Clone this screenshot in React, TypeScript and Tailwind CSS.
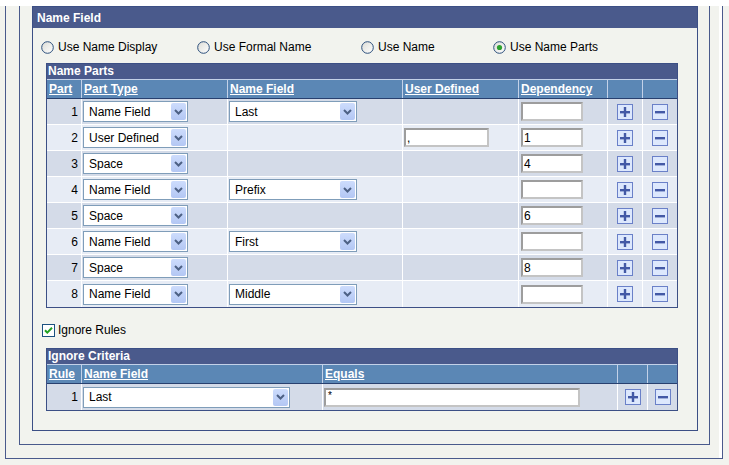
import React from "react"

type Part = {
  type: string
  field?: string
  user?: string
  dep: string
}

const parts: Part[] = [
  { type: "Name Field", field: "Last", dep: "" },
  { type: "User Defined", user: ",", dep: "1" },
  { type: "Space", dep: "4" },
  { type: "Name Field", field: "Prefix", dep: "" },
  { type: "Space", dep: "6" },
  { type: "Name Field", field: "First", dep: "" },
  { type: "Space", dep: "8" },
  { type: "Name Field", field: "Middle", dep: "" },
]

// column widths include the 1px separator on the left
const partCols = ["w-[34px]", "w-[146px]", "w-[175px]", "w-[116px]", "w-[89px]", "w-[35px]", "w-[35px]"]
const partHeads = ["Part", "Part Type", "Name Field", "User Defined", "Dependency", "", ""]

const ruleCols = ["w-[34px]", "w-[241px]", "w-[295px]", "w-[30px]", "w-[30px]"]
const ruleHeads = ["Rule", "Name Field", "Equals", "", ""]

function Chevron() {
  return (
    <svg width="9" height="6" viewBox="0 0 9 6">
      <path d="M1 1 L4.5 4.5 L8 1" fill="none" stroke="#4d6185" strokeWidth="2" />
    </svg>
  )
}

function Select({ value, width }: { value: string; width: string }) {
  return (
    <div className={`${width} flex h-[21px] items-center border border-[#7f9db9] bg-white p-px`}>
      <span className="flex-1 truncate pl-[4px] leading-none">{value}</span>
      <span className="flex h-full w-[15px] items-center justify-center rounded-[2px] bg-gradient-to-b from-[#cddcfc] to-[#b3c7f4]">
        <Chevron />
      </span>
    </div>
  )
}

function TextBox({ value, width }: { value?: string; width: string }) {
  return (
    <div
      className={`${width} flex h-[19px] items-center border-2 border-[#c4c4c4] border-t-[#9d9d9d] border-l-[#9d9d9d] bg-white pl-[1px] leading-none`}
    >
      {value}
    </div>
  )
}

function RowButton({ kind }: { kind: "add" | "remove" }) {
  return (
    <div className="flex h-[16px] w-[16px] items-center justify-center border border-[#6a80c8] bg-[#dde8fd]">
      <svg width="10" height="10" viewBox="0 0 10 10">
        <rect x="0" y="4" width="10" height="2.4" fill="#4359a6" />
        {kind === "add" && <rect x="3.8" y="0" width="2.4" height="10" fill="#4359a6" />}
      </svg>
    </div>
  )
}

function Radio({ label, checked, width }: { label: string; checked?: boolean; width: string }) {
  return (
    <label className={`${width} flex items-center gap-[4px]`}>
      <svg width="13" height="13" viewBox="0 0 13 13">
        <defs>
          <linearGradient id="rg" x1="0" y1="0" x2="1" y2="1">
            <stop offset="0" stopColor="#dcdcd6" />
            <stop offset="1" stopColor="#ffffff" />
          </linearGradient>
        </defs>
        <circle cx="6.5" cy="6.5" r="5.8" fill="url(#rg)" stroke="#2c4f7c" strokeWidth="1" />
        {checked && <circle cx="6.5" cy="6.5" r="2.6" fill="#2da12d" />}
      </svg>
      <span>{label}</span>
    </label>
  )
}

function GridHead({ title, heads, cols }: { title: string; heads: string[]; cols: string[] }) {
  return (
    <>
      <div className="h-[15px] bg-[#4a5a8c] pl-[1px] text-[12px] font-bold leading-[15px] text-white">{title}</div>
      <div className="flex h-[20px] border-t border-b border-t-[#c3d1e8] border-b-[#28406f] bg-[#5b87b5]">
        {heads.map((h, i) => (
          <div
            key={i}
            className={`${cols[i]} flex items-center pl-[2px] font-bold text-white underline ${i > 0 ? "border-l border-[#c3d1e8]" : ""}`}
          >
            {h}
          </div>
        ))}
      </div>
    </>
  )
}

export default function App() {
  return (
    <div className="min-h-[465px] bg-[#f2f3ee] font-['Liberation_Sans',Arial,sans-serif] text-[12px] text-black">
      <div className="ml-[5px] w-[718px] border-x border-b border-[#4a5a8c] pr-[12px] pb-[13px] pl-[13px] shadow-[inset_-3px_0_0_#ffffff]">
        <div className="border-x border-b border-[#4a5a8c] pr-[11px] pb-[13px] pl-[12px]">
          <div className="mt-[6px] border border-[#3c4f85] pb-[19px]">
            <div className="flex h-[21px] items-center bg-[#4a5a8c] pl-[4px] font-bold text-white">Name Field</div>

            <div className="mt-[11px] ml-[8px] flex h-[16px] items-center">
              <Radio label="Use Name Display" width="w-[156px]" />
              <Radio label="Use Formal Name" width="w-[164px]" />
              <Radio label="Use Name" width="w-[132px]" />
              <Radio label="Use Name Parts" width="w-[160px]" checked />
            </div>

            <div className="mt-[8px] ml-[13px] w-[632px] border border-[#3c4f85]">
              <GridHead title="Name Parts" heads={partHeads} cols={partCols} />
              {parts.map((p, r) => (
                <div
                  key={r}
                  className={`flex h-[26px] ${r < parts.length - 1 ? "border-b border-white" : ""} ${r % 2 === 0 ? "bg-[#d4dbe8]" : "bg-[#e7ecf5]"}`}
                >
                  <div className={`${partCols[0]} flex items-center justify-end pr-[3px]`}>{r + 1}</div>
                  <div className={`${partCols[1]} flex items-center border-l border-white pl-[1px]`}>
                    <Select value={p.type} width="w-[105px]" />
                  </div>
                  <div className={`${partCols[2]} flex items-center border-l border-white pl-[1px]`}>
                    {p.field && <Select value={p.field} width="w-[128px]" />}
                  </div>
                  <div className={`${partCols[3]} flex items-center border-l border-white pl-[1px]`}>
                    {p.user !== undefined && <TextBox value={p.user} width="w-[85px]" />}
                  </div>
                  <div className={`${partCols[4]} flex items-center border-l border-white pl-[2px]`}>
                    <TextBox value={p.dep} width="w-[62px]" />
                  </div>
                  <div className={`${partCols[5]} flex items-center justify-center border-l border-white`}>
                    <RowButton kind="add" />
                  </div>
                  <div className={`${partCols[6]} flex items-center justify-center border-l border-white`}>
                    <RowButton kind="remove" />
                  </div>
                </div>
              ))}
            </div>

            <label className="mt-[14px] ml-[9px] flex h-[16px] items-center gap-[3px]">
              <svg width="13" height="13" viewBox="0 0 13 13">
                <rect x="0.5" y="0.5" width="12" height="12" fill="#ffffff" stroke="#1c5180" />
                <path d="M3 6.2 L5.3 8.6 L10 3.8" fill="none" stroke="#21a121" strokeWidth="2" />
              </svg>
              <span>Ignore Rules</span>
            </label>

            <div className="mt-[10px] ml-[13px] w-[632px] border border-[#3c4f85]">
              <GridHead title="Ignore Criteria" heads={ruleHeads} cols={ruleCols} />
              <div className="flex h-[26px] bg-[#d4dbe8]">
                <div className={`${ruleCols[0]} flex items-center justify-end pr-[3px]`}>1</div>
                <div className={`${ruleCols[1]} flex items-center border-l border-white pl-[1px]`}>
                  <Select value="Last" width="w-[207px]" />
                </div>
                <div className={`${ruleCols[2]} flex items-center border-l border-white pl-[1px]`}>
                  <div className="flex h-[19px] w-[256px] items-start border-2 border-[#c4c4c4] border-t-[#9d9d9d] border-l-[#9d9d9d] bg-white pl-[2px] text-[10px] leading-[11px]">
                    *
                  </div>
                </div>
                <div className={`${ruleCols[3]} flex items-center justify-center border-l border-white`}>
                  <RowButton kind="add" />
                </div>
                <div className={`${ruleCols[4]} flex items-center justify-center border-l border-white`}>
                  <RowButton kind="remove" />
                </div>
              </div>
            </div>
          </div>
        </div>
      </div>
    </div>
  )
}
